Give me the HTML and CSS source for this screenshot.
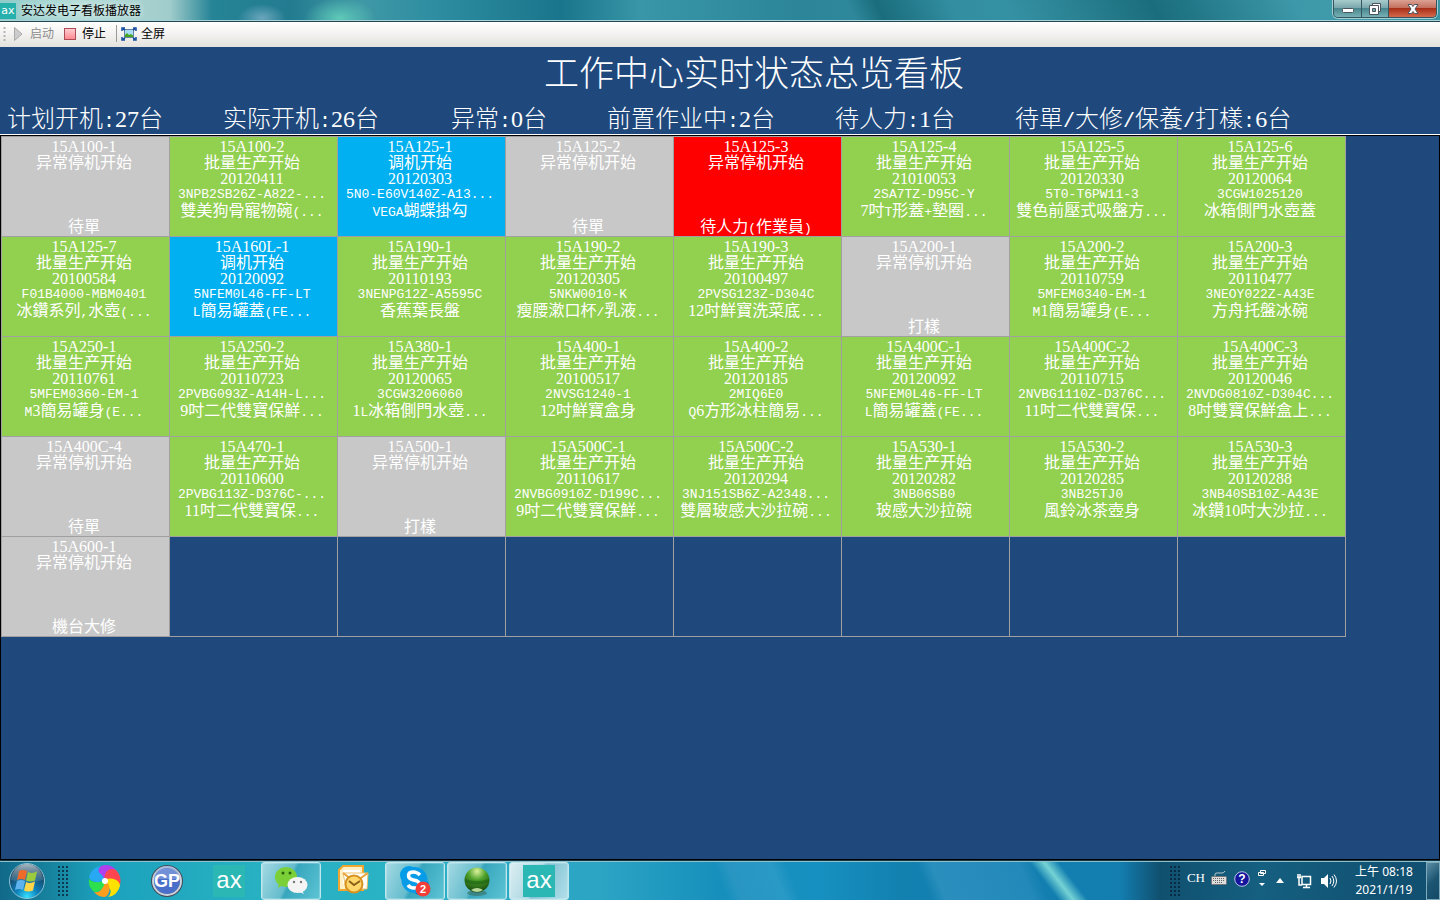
FILE: index.html
```
<!DOCTYPE html>
<html lang="zh-CN">
<head>
<meta charset="utf-8">
<title>安达发电子看板播放器</title>
<link rel="stylesheet" href="styles.css">
</head>
<body>
<div class="screen">
<header class="titlebar">
  <span class="app-mark">ax</span>
  <span class="app-name">安达发电子看板播放器</span>
  <div class="window-buttons">
    <button class="wb" aria-label="最小化"><svg width="14" height="14" viewBox="0 0 14 14"><rect x="1.500" y="6.500" width="11" height="4" rx="1" fill="#fff" stroke="#4b5560"/></svg></button>
    <button class="wb wb-mid" aria-label="还原"><svg width="14" height="14" viewBox="0 0 14 14"><path d="M4.500 1.500h8v8h-8z" fill="#fff" stroke="#4b5560"/><path d="M1.500 3.500h9v9h-9z" fill="#fff" stroke="#4b5560"/><path d="M4.500 6.500h3v3h-3z" fill="#7aa" stroke="#4b5560"/></svg></button>
    <button class="wb wb-close" aria-label="关闭"><svg width="14" height="14" viewBox="0 0 14 14"><path d="M2 2.500h3.500L7 4.500l1.500-2H12L9 7l3 4.500H8.500L7 9.500l-1.500 2H2L5 7z" fill="#fff" stroke="#4b5560"/></svg></button>
  </div>
</header>
<nav class="toolbar">
  <svg class="tool-grip" width="3" height="16" viewBox="0 0 3 16"><path d="M1.500 1v15" stroke="#b4b4b4" stroke-width="2" stroke-dasharray="2 2"/></svg>
  <button class="tool tool-start" disabled><svg width="16" height="16" viewBox="0 0 16 16"><path d="M4.500 1.500v13L12 8z" fill="#ccc" stroke="#aaa"/></svg>启动</button>
  <button class="tool tool-stop"><svg width="16" height="16" viewBox="0 0 16 16"><defs><linearGradient id="stop" x2="0" y2="1"><stop stop-color="#ffd0d4"/><stop offset="1" stop-color="#ff868d"/></linearGradient></defs><rect x="2.500" y="2.500" width="11" height="11" fill="url(#stop)" stroke="#ad4b56"/></svg>停止</button>
  <span class="tool-rule"></span>
  <button class="tool tool-full"><svg width="16" height="16" viewBox="0 0 16 16"><rect x="3.500" y="3.500" width="9" height="8" fill="#a9dcf5" stroke="#6482a2"/><path d="M4 11V9l2-2 2 2 2-1 2 1.500V11z" fill="#45a51e"/><path d="M1 5V2h3M12 2h3v3M1 11v3h3M15 11v3h-3M2 3l2 1M14 3l-2 1M2 13l2-1M14 13l-2-1" fill="none" stroke="#164d9d" stroke-width="1.500"/></svg>全屏</button>
</nav>

<main class="board">
  <h1>工作中心实时状态总览看板</h1>
  <div class="stats">
    <span>计划开机<i>:</i>27台</span><span class="wide">实际开机<i>:</i>26台</span><span>异常<i>:</i>0台</span><span>前置作业中<i>:</i>2台</span><span>待人力<i>:</i>1台</span><span>待單<i>/</i>大修<i>/</i>保養<i>/</i>打樣<i>:</i>6台</span>
  </div>
  <div class="sheet">
  <table>
  <tr>
    <td class="idle"><div><p>15A100-1</p><p>异常停机开始</p><p class="last">待單</p></div></td>
    <td><div><p>15A100-2</p><p>批量生产开始</p><p>20120411</p><p class="code">3NPB2SB26Z-A822-...</p><p>雙美狗骨寵物碗<i>(...</i></p></div></td>
    <td class="tune"><div><p>15A125-1</p><p>调机开始</p><p>20120303</p><p class="code">5N0-E60V140Z-A13...</p><p><i>VEGA</i>蝴蝶掛勾</p></div></td>
    <td class="idle"><div><p>15A125-2</p><p>异常停机开始</p><p class="last">待單</p></div></td>
    <td class="alarm"><div><p>15A125-3</p><p>异常停机开始</p><p class="last">待人力<i>(</i>作業員<i>)</i></p></div></td>
    <td><div><p>15A125-4</p><p>批量生产开始</p><p>21010053</p><p class="code">2SA7TZ-D95C-Y</p><p>7吋<i>T</i>形蓋<i>+</i>墊圈<i>...</i></p></div></td>
    <td><div><p>15A125-5</p><p>批量生产开始</p><p>20120330</p><p class="code">5T0-T6PW11-3</p><p>雙色前壓式吸盤方<i>...</i></p></div></td>
    <td><div><p>15A125-6</p><p>批量生产开始</p><p>20120064</p><p class="code">3CGW1025120</p><p>冰箱側門水壺蓋</p></div></td>
  </tr>
  <tr>
    <td><div><p>15A125-7</p><p>批量生产开始</p><p>20100584</p><p class="code">F01B4000-MBM0401</p><p>冰鑽系列<i>,</i>水壺<i>(...</i></p></div></td>
    <td class="tune"><div><p>15A160L-1</p><p>调机开始</p><p>20120092</p><p class="code">5NFEM0L46-FF-LT</p><p><i>L</i>簡易罐蓋<i>(FE...</i></p></div></td>
    <td><div><p>15A190-1</p><p>批量生产开始</p><p>20110193</p><p class="code">3NENPG12Z-A5595C</p><p>香蕉葉長盤</p></div></td>
    <td><div><p>15A190-2</p><p>批量生产开始</p><p>20120305</p><p class="code">5NKW0010-K</p><p>瘦腰漱口杯<i>/</i>乳液<i>...</i></p></div></td>
    <td><div><p>15A190-3</p><p>批量生产开始</p><p>20100497</p><p class="code">2PVSG123Z-D304C</p><p>12吋鮮寶洗菜底<i>...</i></p></div></td>
    <td class="idle"><div><p>15A200-1</p><p>异常停机开始</p><p class="last">打樣</p></div></td>
    <td><div><p>15A200-2</p><p>批量生产开始</p><p>20110759</p><p class="code">5MFEM0340-EM-1</p><p><i>M</i>1簡易罐身<i>(E...</i></p></div></td>
    <td><div><p>15A200-3</p><p>批量生产开始</p><p>20110477</p><p class="code">3NEOY022Z-A43E</p><p>方舟托盤冰碗</p></div></td>
  </tr>
  <tr>
    <td><div><p>15A250-1</p><p>批量生产开始</p><p>20110761</p><p class="code">5MFEM0360-EM-1</p><p><i>M</i>3簡易罐身<i>(E...</i></p></div></td>
    <td><div><p>15A250-2</p><p>批量生产开始</p><p>20110723</p><p class="code">2PVBG093Z-A14H-L...</p><p>9吋二代雙寶保鮮<i>...</i></p></div></td>
    <td><div><p>15A380-1</p><p>批量生产开始</p><p>20120065</p><p class="code">3CGW3206060</p><p>1<i>L</i>冰箱側門水壺<i>...</i></p></div></td>
    <td><div><p>15A400-1</p><p>批量生产开始</p><p>20100517</p><p class="code">2NVSG1240-1</p><p>12吋鮮寶盒身</p></div></td>
    <td><div><p>15A400-2</p><p>批量生产开始</p><p>20120185</p><p class="code">2MIQ6E0</p><p><i>Q</i>6方形冰柱簡易<i>...</i></p></div></td>
    <td><div><p>15A400C-1</p><p>批量生产开始</p><p>20120092</p><p class="code">5NFEM0L46-FF-LT</p><p><i>L</i>簡易罐蓋<i>(FE...</i></p></div></td>
    <td><div><p>15A400C-2</p><p>批量生产开始</p><p>20110715</p><p class="code">2NVBG1110Z-D376C...</p><p>11吋二代雙寶保<i>...</i></p></div></td>
    <td><div><p>15A400C-3</p><p>批量生产开始</p><p>20120046</p><p class="code">2NVDG0810Z-D304C...</p><p>8吋雙寶保鮮盒上<i>...</i></p></div></td>
  </tr>
  <tr>
    <td class="idle"><div><p>15A400C-4</p><p>异常停机开始</p><p class="last">待單</p></div></td>
    <td><div><p>15A470-1</p><p>批量生产开始</p><p>20110600</p><p class="code">2PVBG113Z-D376C-...</p><p>11吋二代雙寶保<i>...</i></p></div></td>
    <td class="idle"><div><p>15A500-1</p><p>异常停机开始</p><p class="last">打樣</p></div></td>
    <td><div><p>15A500C-1</p><p>批量生产开始</p><p>20110617</p><p class="code">2NVBG0910Z-D199C...</p><p>9吋二代雙寶保鮮<i>...</i></p></div></td>
    <td><div><p>15A500C-2</p><p>批量生产开始</p><p>20120294</p><p class="code">3NJ151SB6Z-A2348...</p><p>雙層玻感大沙拉碗<i>...</i></p></div></td>
    <td><div><p>15A530-1</p><p>批量生产开始</p><p>20120282</p><p class="code">3NB06SB0</p><p>玻感大沙拉碗</p></div></td>
    <td><div><p>15A530-2</p><p>批量生产开始</p><p>20120285</p><p class="code">3NB25TJ0</p><p>風鈴冰茶壺身</p></div></td>
    <td><div><p>15A530-3</p><p>批量生产开始</p><p>20120288</p><p class="code">3NB40SB10Z-A43E</p><p>冰鑽10吋大沙拉<i>...</i></p></div></td>
  </tr>
  <tr>
    <td class="idle"><div><p>15A600-1</p><p>异常停机开始</p><p class="last">機台大修</p></div></td>
    <td class="none"></td><td class="none"></td><td class="none"></td><td class="none"></td><td class="none"></td><td class="none"></td><td class="none"></td>
  </tr>
  </table>
  </div>
</main>

<footer class="taskbar">
  <button class="start" aria-label="开始"><svg width="38" height="38" viewBox="0 0 38 38"><defs><radialGradient id="orb" cx=".5" cy=".95" r=".8"><stop stop-color="#35e0ff"/><stop offset=".4" stop-color="#0d80bb"/><stop offset="1" stop-color="#173a55"/></radialGradient><linearGradient id="gloss" x2="0" y2="1"><stop stop-color="#e4eef2" stop-opacity=".7"/><stop offset="1" stop-color="#8fb0bf" stop-opacity=".15"/></linearGradient></defs><circle cx="19" cy="19" r="17.500" fill="url(#orb)" stroke="#8fc3d4"/><path d="M3 18a16 16 0 0 1 32 0q-16 5-32 0z" fill="url(#gloss)"/><path d="M11 9q4-2 8 0l-2 9q-4-2-8 0z" fill="#ee6a2b"/><path d="M20 10q4 2 9-.5l-2 9q-5 2-9 0z" fill="#9bcb3c"/><path d="M9 19q4-2 8 0l-2 9q-4-2-8 0z" fill="#5eb3ef"/><path d="M18 20q4 2 9-.5l-2 9q-5 2-9 0z" fill="#ffd54a"/></svg></button>
  <svg class="grip" width="10" height="32" viewBox="0 0 10 32"><path d="M1 1v31M5 1v31M9 1v31" stroke="#0b3a50" stroke-width="2" stroke-dasharray="2 2"/></svg>
  <div class="apps">
    <button class="app" aria-label="浏览器"><svg width="34" height="34" viewBox="0 0 34 34"><path d="M17 16C9 14 8 6 13 2q9-3 15 4-8-2-9 4z" fill="#b040ee"/><path d="M17 16C15 8 22 3 28 6q6 6 4 15-4-6-9-3z" fill="#ff4550"/><path d="M17 16C25 12 32 17 32 22q-3 10-12 11 5-5 1-9z" fill="#ffe100"/><path d="M17 16C24 22 22 31 17 33q-7 0-11-5 8 1 8-6z" fill="#ff9d1c"/><path d="M17 17C16 26 9 30 5 27Q0 22 1 15q5 5 9 2z" fill="#2de04e"/><path d="M17 16C10 20 3 18 1 13 3 6 8 3 12 2q-4 6 2 9z" fill="#27a9f3"/><circle cx="17" cy="17" r="3" fill="#fff"/></svg></button>
    <button class="app" aria-label="GP"><svg width="34" height="34" viewBox="0 0 34 34"><circle cx="17" cy="17" r="14.500" fill="#4a6fca" stroke="#434b59" stroke-width="3"/><circle cx="17" cy="17" r="14" fill="none" stroke="#cbd2dc" stroke-width="2"/><path d="M4 15a13 13 0 0 1 26 0z" fill="#8ea7e0" opacity=".6"/><text x="17" y="23" text-anchor="middle" class="gp">GP</text></svg></button>
    <button class="app"><span class="ax">ax</span></button>
    <button class="app open" aria-label="微信"><svg width="34" height="34" viewBox="0 0 34 34"><path d="M5 19l-1 5 5-3z" fill="#7bd038"/><ellipse cx="12" cy="13" rx="11" ry="10" fill="#7bd038"/><path d="M27 25l3 5-7-3z" fill="#f4f4f4"/><ellipse cx="23.500" cy="21" rx="10" ry="8" fill="#f4f4f4"/><circle cx="9" cy="9" r="1.500" fill="#28600d"/><circle cx="16" cy="9" r="1.500" fill="#28600d"/><circle cx="20" cy="18" r="1.200" fill="#777"/><circle cx="27" cy="18" r="1.200" fill="#777"/></svg></button>
    <button class="app" aria-label="Outlook"><svg width="34" height="34" viewBox="0 0 34 34"><path d="M3 6l4-4h20v24H3z" fill="#fff0c5" stroke="#f0a62f" stroke-width="2"/><path d="M7 6h17v14H7z" fill="#fff"/><path d="M7 9h25l-1 16H10z" fill="#fff" stroke="#eec36a"/><path d="M7 9l12 9L32 9" fill="none" stroke="#e8a339" stroke-width="2"/><circle cx="18" cy="20" r="8.500" fill="#ffd76a" stroke="#d69222" stroke-width="2"/><path d="M13 17l5 4 6-4" fill="none" stroke="#8a6117" stroke-width="2"/></svg></button>
    <button class="app open" aria-label="Skype"><svg width="34" height="34" viewBox="0 0 34 34"><circle cx="11" cy="11" r="9" fill="#009ee8"/><circle cx="22" cy="22" r="9" fill="#0078ca"/><circle cx="16.500" cy="16" r="13" fill="#089ce8"/><path d="M22 11Q19 8 15.500 8q-5 0-5 3.500t5 4.500q6 1 6 4.500t-5.500 3.500q-4 0-6-3" fill="none" stroke="#fff" stroke-width="3.500"/><circle cx="25" cy="25" r="7.500" fill="#f23d38"/><text x="25" y="29" text-anchor="middle" class="badge">2</text></svg></button>
    <button class="app open" aria-label="看板"><svg width="34" height="34" viewBox="0 0 34 34"><defs><radialGradient id="ball" cx=".5" cy=".15" r=".9"><stop stop-color="#dcf39a"/><stop offset=".4" stop-color="#4da02a"/><stop offset="1" stop-color="#113f0c"/></radialGradient></defs><ellipse cx="17" cy="29" rx="10" ry="3" fill="#396d60" opacity=".6"/><circle cx="17" cy="16" r="12.500" fill="url(#ball)"/><path d="M11 26q6-4 12 0-6 4-12 0z" fill="#b7d99a"/><path d="M5 15q12 4 24 0v3q-12 5-24 0z" fill="#145b0d" opacity=".5"/></svg></button>
    <button class="app open active"><span class="ax">ax</span></button>
  </div>
  <div class="tray">
    <svg class="grip" width="10" height="32" viewBox="0 0 10 32"><path d="M1 1v31M5 1v31M9 1v31" stroke="#0a2c42" stroke-width="2" stroke-dasharray="2 2"/></svg>
    <span class="lang">CH</span>
    <svg class="kbd" width="16" height="16" viewBox="0 0 16 16"><path d="M4 5V3q0-1 2-1h5q2 0 3-2" fill="none" stroke="#bcc"/><rect x=".5" y="5.500" width="15" height="8" rx="1" fill="#ddd" stroke="#777"/><path d="M2 7.500h12M2 9.500h12M4 11.500h8" stroke="#666" stroke-dasharray="1 1"/></svg>
    <svg class="help" width="16" height="16" viewBox="0 0 16 16"><circle cx="8" cy="8" r="7.300" fill="#15159d" stroke="#b9c3e6"/><text x="8" y="12" text-anchor="middle" class="q">?</text></svg>
    <svg class="restore" width="10" height="18" viewBox="0 0 10 18"><path d="M3.500 1.500h5v3h-5zM1.500 3.500h5v3h-5z" fill="#17587c" stroke="#fff"/><path d="M2 14h6l-3 3z" fill="#fff"/></svg>
    <svg class="arrow" width="8" height="5" viewBox="0 0 8 5"><path d="M4 0l4 5H0z" fill="#fff"/></svg>
    <svg class="net" width="16" height="16" viewBox="0 0 16 16"><path d="M6 3.500h8.500v8H6zM10.500 12v3M7 14.500h7M2 1v3M4 1v3M1 4.500h4M3 5v7h3" fill="none" stroke="#fff" stroke-width="1.500"/></svg>
    <svg class="sound" width="18" height="16" viewBox="0 0 18 16"><path d="M1 5h3l4-4v14l-4-4H1z" fill="#fff"/><path d="M10 5q2 3 0 6M12 3q3.500 5 0 10M14 1.500q5 6.500 0 13" fill="none" stroke="#fff"/></svg>
    <div class="clock"><span>上午 08:18</span><span>2021/1/19</span></div>
    <button class="desk" aria-label="显示桌面"></button>
  </div>
</footer>
</div>
</body>
</html>
```
FILE: styles.css
```
* { box-sizing: border-box; }
body { margin: 0; background: #1f497d; font-family: "Noto Sans", "Noto Sans CJK SC", sans-serif; }
button { margin: 0; padding: 0; border: 0; background: none; font: inherit; color: inherit; }
svg { display: block; flex: none; }
p, h1 { margin: 0; font-weight: inherit; }
.screen { display: flex; flex-direction: column; min-height: 100vh; }

.titlebar {
  display: flex; align-items: flex-start; height: 22px;
  border-bottom: 1px solid #27464f;
  box-shadow: inset 0 -1px #a5d3d8;
  background:
    radial-gradient(ellipse 36px 20px at 340px 18px, #5fc9b8, transparent),
    radial-gradient(ellipse 24px 14px at 262px 18px, #6aa6bd, transparent),
    linear-gradient(65deg, transparent 59%, #1a6d7c 61%, transparent 66%, transparent 70%, #1a6d7c 80%, transparent 90%),
    linear-gradient(90deg, #8fcbc9 0, #b4dcd8 80px, #a0cccb 170px, #258496 212px, #237b90 290px, #3f98a5 360px, #2f8ea2 430px, #19758b 560px, #3896a8 640px, #2c8599 800px, #3490a3 1000px, #3f9aaa 1340px, #3c94a2 100%);
}
.app-mark { margin-top: 3px; width: 16px; height: 16px; background: #27b1ad; color: #fff; font: 11px/15px "DejaVu Sans", sans-serif; text-align: center; }
.app-name { margin-left: 5px; font-size: 12px; line-height: 21px; color: #000; text-shadow: 0 0 6px #fff; }
.window-buttons { display: flex; height: 18px; margin-left: auto; margin-right: 3px; border: 1px solid #35565e; border-top: 0; border-radius: 0 0 5px 5px; box-shadow: 0 0 0 1px #a4cfd2; overflow: hidden; }
.wb { display: flex; align-items: center; justify-content: center; width: 28px; background: linear-gradient(#a9cccd, #7aa7ac 45%, #4a868e 50%, #77b1b6); border-right: 1px solid #35565e; }
.wb-mid { width: 27px; }
.wb-close { width: 47px; border: 0; background: linear-gradient(#dba294, #c4705e 45%, #a93018 50%, #d5694b); }

.toolbar { display: flex; align-items: center; height: 25px; padding-left: 3px; padding-bottom: 2px; background: linear-gradient(#fff, #f4f3f1 45%, #e3e2de); font-size: 12px; line-height: 16px; color: #000; }
.tool { display: flex; align-items: center; gap: 4px; }
.tool-start { margin-left: 4px; color: #8c8c8c; }
.tool-stop { margin-left: 8px; }
.tool-rule { width: 1px; height: 17px; margin: 0 4px 0 10px; background: #999; }

.board { flex: 1; display: flex; flex-direction: column; background: #1f497d; color: #fff; font-family: "Liberation Serif", "Noto Sans CJK SC", serif; font-weight: 300; }
h1 { padding-top: 2px; padding-left: 68px; font-size: 35px; line-height: 52px; text-align: center; white-space: nowrap; }
.stats { display: flex; gap: 60px; height: 34px; padding-left: 7px; padding-top: 3px; font-size: 24px; line-height: 30px; white-space: nowrap; }
.stats .wide { min-width: 168px; }
i { font-family: "Liberation Mono", monospace; font-style: normal; font-size: 13px; line-height: 16px; }
.stats i { font-size: 20px; line-height: 24px; }
.sheet { flex: 1; border: 1px solid #000; box-shadow: 0 -1px #fff; }

table { border-collapse: collapse; table-layout: fixed; width: 1345px; }
td { height: 100px; padding: 0; border: 1px solid #a0a0a0; background: #92d050; vertical-align: top; font-weight: 400; }
td div { display: flex; flex-direction: column; height: 99px; padding: 2px 3px 1px 0; font-size: 16px; line-height: 16px; text-align: center; white-space: nowrap; }
td p { height: 16px; }
.code { font-family: "Liberation Mono", monospace; font-size: 13px; }
td .last { margin-top: auto; }
.idle { background: #c8c8c8; }
.tune { background: #00b0f0; }
.alarm { background: #f00; }
.none { background: #1f497d; }

.taskbar {
  display: flex; align-items: center; height: 40px; padding-left: 8px;
  border-top: 1px solid #14343f; box-shadow: inset 0 1px #8fc0cd;
  background:
    linear-gradient(90deg, transparent 1120px, #10506f 1160px, #155f80 1260px, #115070 1400px),
    linear-gradient(52deg, transparent 72%, #75d3d4 73%, transparent 74%),
    linear-gradient(68deg, transparent 50%, #2996c2 51%, #2999c6 54%, transparent 55%, transparent 64%, #2a8fbd 65%, #2389ba 71%, transparent 72%),
    linear-gradient(90deg, #11698a 0, #17839e 50px, #1ba1bd 100px, #28b1c2 260px, #2ab2c5 400px, #2ca4c4 600px, #168fbc 720px, #1690c0 820px, #1281b0 900px, #137eb0 1100px, #1378ae 100%);
}
.start { margin-right: 12px; }
.apps { display: flex; gap: 2px; margin-left: 7px; height: 38px; }
.app { display: flex; align-items: center; justify-content: center; width: 60px; border: 1px solid transparent; border-radius: 3px; }
.open { border-color: #c0e7ed; box-shadow: inset 0 0 0 1px #ffffff33; background: linear-gradient(115deg, #a4dae3, #65bccd 45%, #37a6bd 50%, #5dc4d4); }
.active { background: linear-gradient(115deg, #dceef2, #add8e3 45%, #80bfd2 50%, #b2e1ea); }
.ax { width: 32px; height: 32px; background: #2bb7b3; color: #fff; font: 24px/29px "Liberation Sans", sans-serif; text-align: center; }
.gp { font: bold 18px "Liberation Sans", sans-serif; fill: #fff; }
.badge { font: bold 11px "Liberation Sans", sans-serif; fill: #fff; }
.q { font: bold 12px "Liberation Sans", sans-serif; fill: #fff; }
.tray { display: flex; align-items: center; height: 38px; margin-left: auto; color: #fff; }
.lang { margin: 0 6px 6px 7px; font: 13px/16px "Liberation Serif", serif; }
.kbd, .help { margin-bottom: 4px; margin-right: 7px; }
.restore { margin-right: 9px; margin-bottom: 6px; }
.arrow { margin-right: 12px; }
.net { margin-right: 8px; }
.clock { display: flex; flex-direction: column; align-items: center; width: 76px; margin-left: 8px; font-size: 12px; line-height: 18px; white-space: nowrap; }
.desk { width: 14px; height: 38px; margin-left: 4px; border: 1px solid #7eaabd; background: linear-gradient(135deg, #5d8ea5, #1d5673 50%, #124a68); }
```
